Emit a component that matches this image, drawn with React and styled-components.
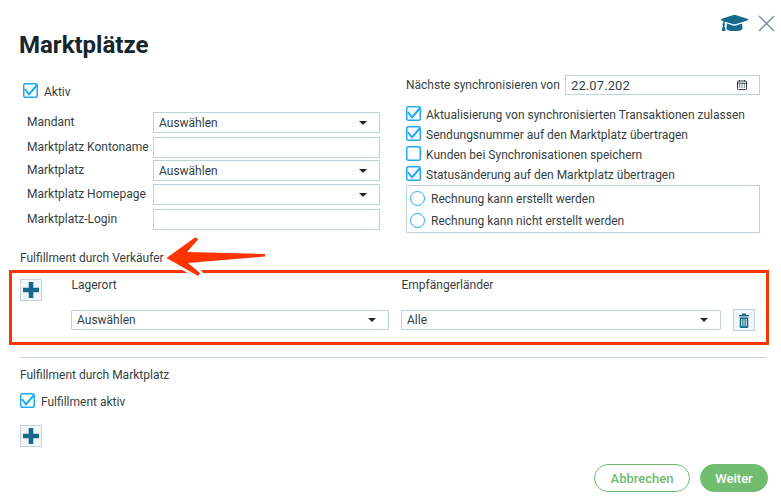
import React from "react";
import styled, { createGlobalStyle } from "styled-components";
import { FaGraduationCap } from "react-icons/fa";

const GlobalStyle = createGlobalStyle`
  html, body {
    margin: 0;
    padding: 0;
    background: #fff;
  }
  * {
    box-sizing: border-box;
  }
`;

const Page = styled.div`
  position: relative;
  width: 781px;
  height: 501px;
  overflow: hidden;
  padding: 14px 13px 0 20px;
  background: #fff;
  color: #353f43;
  font-family: "Roboto", "Liberation Sans", sans-serif;
  font-size: 12px;
`;

const TopBar = styled.div`
  display: flex;
  justify-content: flex-end;
  align-items: center;
  gap: 10px;
  height: 18px;
  margin-right: -7px;
`;

const CapIcon = styled(FaGraduationCap)`
  width: 27px;
  height: 22px;
  margin-top: -1px;
  color: #14698c;
`;

const Title = styled.h1`
  margin: 0 0 0 -1px;
  height: 43px;
  line-height: 26px;
  font-family: "Roboto", "Noto Sans", sans-serif;
  font-size: 24px;
  font-weight: 700;
  color: #15262c;
`;

const Columns = styled.div`
  display: grid;
  grid-template-columns: 360px 354px;
  column-gap: 26px;
  height: 158px;
`;

const LeftColumn = styled.div`
  padding: 8px 0 0 3px;
`;

const RightColumn = styled.div`
  display: flex;
  flex-direction: column;
`;

const FieldRow = styled.div`
  display: grid;
  grid-template-columns: 126px 227px;
  align-items: center;
  margin-top: ${(p) => p.$top}px;
  padding-left: 4px;
`;

const FieldLabel = styled.span`
  white-space: nowrap;
  line-height: 14px;
  margin-top: -2px;
`;

const TextBox = styled.div`
  height: 21px;
  border: 1px solid #c0d3db;
  background: #fff;
`;

const SelectBox = styled.div`
  display: flex;
  align-items: center;
  justify-content: space-between;
  height: ${(p) => p.$height || 21}px;
  padding: 0 12px 0 5px;
  border: 1px solid #c0d3db;
  background: #fff;
`;

const SelectText = styled.span`
  margin-top: ${(p) => p.$shift || 0}px;
`;

const Caret = styled.span`
  width: 0;
  height: 0;
  border-left: 4px solid transparent;
  border-right: 4px solid transparent;
  border-top: 4px solid #20292c;
`;

const CheckRow = styled.label`
  display: flex;
  align-items: center;
  gap: ${(p) => p.$gap || 5}px;
  height: 15px;
  line-height: 15px;
  margin-top: ${(p) => p.$top || 0}px;
  white-space: nowrap;
`;

const CheckText = styled.span`
  padding-top: 4px;
`;

const CheckSvg = styled.svg`
  flex: none;
  display: block;
  overflow: visible;
`;

const Check = ({ checked = true }) => (
  <CheckSvg width="15" height="15" viewBox="0 0 15 15">
    <rect x="0.75" y="0.75" width="13.5" height="13.5" rx="1.5" fill="#fff" stroke="#1eabf5" strokeWidth="1.5" />
    {checked && <path d="M2 6l4 5.5L14 2" fill="none" stroke="#1eabf5" strokeWidth="2" />}
  </CheckSvg>
);

const DateRow = styled.div`
  display: flex;
  align-items: center;
  justify-content: space-between;
  height: 20px;
  margin-bottom: 11px;
  white-space: nowrap;
`;

const DateBox = styled.div`
  display: flex;
  align-items: center;
  justify-content: space-between;
  width: 195px;
  height: 20px;
  padding: 0 12px 0 5px;
  border: 1px solid #c0d3db;
  font-size: 13px;
  letter-spacing: 0.1px;
`;

const RadioPanel = styled.div`
  display: flex;
  flex-direction: column;
  gap: 7px;
  height: 48px;
  margin-top: 4px;
  padding: 5px 0 0 3px;
  border: 1px solid #c0d3db;
`;

const RadioRow = styled.div`
  display: flex;
  align-items: center;
  gap: 6px;
  height: 15px;
  white-space: nowrap;
`;

const Radio = styled.span`
  flex: none;
  width: 15px;
  height: 15px;
  border: 1px solid #1eabf5;
  border-radius: 50%;
`;

const SectionTitle = styled.div`
  height: 14px;
  line-height: 14px;
  margin-top: ${(p) => p.$top}px;
`;

const FulfillGrid = styled.div`
  display: grid;
  grid-template-columns: 39px 318px 320px 22px;
  grid-template-rows: 30px 22px;
  column-gap: 12px;
  margin-top: 14px;
`;

const GridLabel = styled.span`
  line-height: 12px;
  padding-left: 0.5px;
`;

const SquareButton = styled.button`
  display: flex;
  align-items: center;
  justify-content: center;
  width: 22px;
  height: 22px;
  margin-top: ${(p) => p.$top || 0}px;
  padding: 0;
  border: 1px solid #c0d3db;
  background: #f1f6f8;
`;

const SelectCell = styled.div`
  padding-top: 1px;
`;

const Divider = styled.hr`
  height: 1px;
  margin: 26px 2px 0 0;
  border: 0;
  background: #c8d6dc;
`;

const Footer = styled.div`
  display: flex;
  justify-content: flex-end;
  gap: 10px;
  margin-top: 17px;
`;

const PillButton = styled.button`
  width: ${(p) => p.$width}px;
  height: 28px;
  padding: 0;
  border: 1px solid #70bd6f;
  border-radius: 14px;
  background: ${(p) => (p.$primary ? "#70bd6f" : "#fff")};
  color: ${(p) => (p.$primary ? "#fff" : "#70bd6f")};
  font-family: inherit;
  font-size: 13px;
  font-weight: 500;
`;

const RedFrame = styled.div`
  position: absolute;
  left: 9px;
  top: 270px;
  width: 760px;
  height: 75px;
  border: 3px solid #ff3300;
  pointer-events: none;
`;

const ArrowSvg = styled.svg`
  position: absolute;
  left: 155px;
  top: 230px;
  overflow: visible;
`;

const PlusIcon = () => (
  <svg width="18" height="18" viewBox="0 0 18 18">
    <path d="M6.7 1h4.6v5.7H17v4.6h-5.7V17H6.7v-5.7H1V6.7h5.7z" fill="#14698c" />
  </svg>
);

const TrashIcon = () => (
  <svg width="10" height="15" viewBox="0 0 10 15">
    <path d="M3 2V.5h4V2h3v1.5H0V2z" fill="#14698c" />
    <path
      fillRule="evenodd"
      d="M.7 4.5h8.6v9.4a1 1 0 0 1-1 1H1.7a1 1 0 0 1-1-1zM2.3 6v7.3h1V6zm2.2 0v7.3h1V6zm2.2 0v7.3h1V6z"
      fill="#14698c"
    />
  </svg>
);

const CloseIcon = () => (
  <svg width="17" height="17" viewBox="0 0 17 17">
    <path d="M1 1l15 15M16 1L1 16" stroke="#7488a8" strokeWidth="1.3" fill="none" />
  </svg>
);

const CalendarIcon = () => (
  <svg width="10" height="10" viewBox="0 0 10 10">
    <path d="M2.5 0v1.5M7.5 0v1.5" stroke="#2e3a3f" strokeWidth="1" />
    <rect x="0.5" y="1" width="9" height="8.5" rx="1" fill="none" stroke="#2e3a3f" strokeWidth="1" />
    <path d="M0.5 3.2h9" stroke="#2e3a3f" strokeWidth="1" />
    <path d="M2 5h1.2M4.4 5h1.2M6.8 5H8M2 7h1.2M4.4 7h1.2M6.8 7H8" stroke="#2e3a3f" strokeWidth="1" />
  </svg>
);

const fields = [
  { label: "Mandant", top: 14, select: true, value: "Auswählen" },
  { label: "Marktplatz Kontoname", top: 4 },
  { label: "Marktplatz", top: 2, select: true, value: "Auswählen" },
  { label: "Marktplatz Homepage", top: 3, select: true, value: "" },
  { label: "Marktplatz-Login", top: 4 },
];

const options = [
  { label: "Aktualisierung von synchronisierten Transaktionen zulassen", checked: true },
  { label: "Sendungsnummer auf den Marktplatz übertragen", checked: true },
  { label: "Kunden bei Synchronisationen speichern", checked: false },
  { label: "Statusänderung auf den Marktplatz übertragen", checked: true },
];

const App = () => {
  return (
    <Page>
      <GlobalStyle />
      <TopBar>
        <CapIcon />
        <CloseIcon />
      </TopBar>
      <Title>Marktplätze</Title>

      <Columns>
        <LeftColumn>
          <CheckRow $gap={6}>
            <Check />
            <CheckText>Aktiv</CheckText>
          </CheckRow>
          {fields.map((f) => (
            <FieldRow key={f.label} $top={f.top}>
              <FieldLabel>{f.label}</FieldLabel>
              {f.select ? (
                <SelectBox>
                  <SelectText>{f.value}</SelectText>
                  <Caret />
                </SelectBox>
              ) : (
                <TextBox />
              )}
            </FieldRow>
          ))}
        </LeftColumn>

        <RightColumn>
          <DateRow>
            Nächste synchronisieren von
            <DateBox>
              22.07.202
              <CalendarIcon />
            </DateBox>
          </DateRow>
          {options.map((o, i) => (
            <CheckRow key={o.label} $top={i === 0 ? 0 : 5}>
              <Check checked={o.checked} />
              <CheckText>{o.label}</CheckText>
            </CheckRow>
          ))}
          <RadioPanel>
            <RadioRow>
              <Radio />
              Rechnung kann erstellt werden
            </RadioRow>
            <RadioRow>
              <Radio />
              Rechnung kann nicht erstellt werden
            </RadioRow>
          </RadioPanel>
        </RightColumn>
      </Columns>

      <SectionTitle $top={18}>Fulfillment durch Verkäufer</SectionTitle>
      <FulfillGrid>
        <SquareButton>
          <PlusIcon />
        </SquareButton>
        <GridLabel>Lagerort</GridLabel>
        <GridLabel>Empfängerländer</GridLabel>
        <span />
        <span />
        <SelectCell>
          <SelectBox $height={20}>
            <SelectText $shift={-1}>Auswählen</SelectText>
            <Caret />
          </SelectBox>
        </SelectCell>
        <SelectCell>
          <SelectBox $height={20}>
            <SelectText $shift={-1}>Alle</SelectText>
            <Caret />
          </SelectBox>
        </SelectCell>
        <SquareButton>
          <TrashIcon />
        </SquareButton>
      </FulfillGrid>

      <Divider />
      <SectionTitle $top={10}>Fulfillment durch Marktplatz</SectionTitle>
      <CheckRow $top={11} $gap={6}>
        <Check />
        <CheckText>Fulfillment aktiv</CheckText>
      </CheckRow>
      <SquareButton $top={17}>
        <PlusIcon />
      </SquareButton>

      <Footer>
        <PillButton $width={96}>Abbrechen</PillButton>
        <PillButton $width={68} $primary>
          Weiter
        </PillButton>
      </Footer>

      <RedFrame />
      <ArrowSvg width="115" height="50" viewBox="0 0 115 50">
        <path
          d="M11.5 28L40 7.5L43.5 9L32 22L110 24L110 26.5L33 33L45 43L43 46z"
          fill="#ff3300"
          stroke="#fff"
          strokeWidth="5"
          paintOrder="stroke"
          strokeLinejoin="round"
        />
      </ArrowSvg>
    </Page>
  );
};

export default App;
